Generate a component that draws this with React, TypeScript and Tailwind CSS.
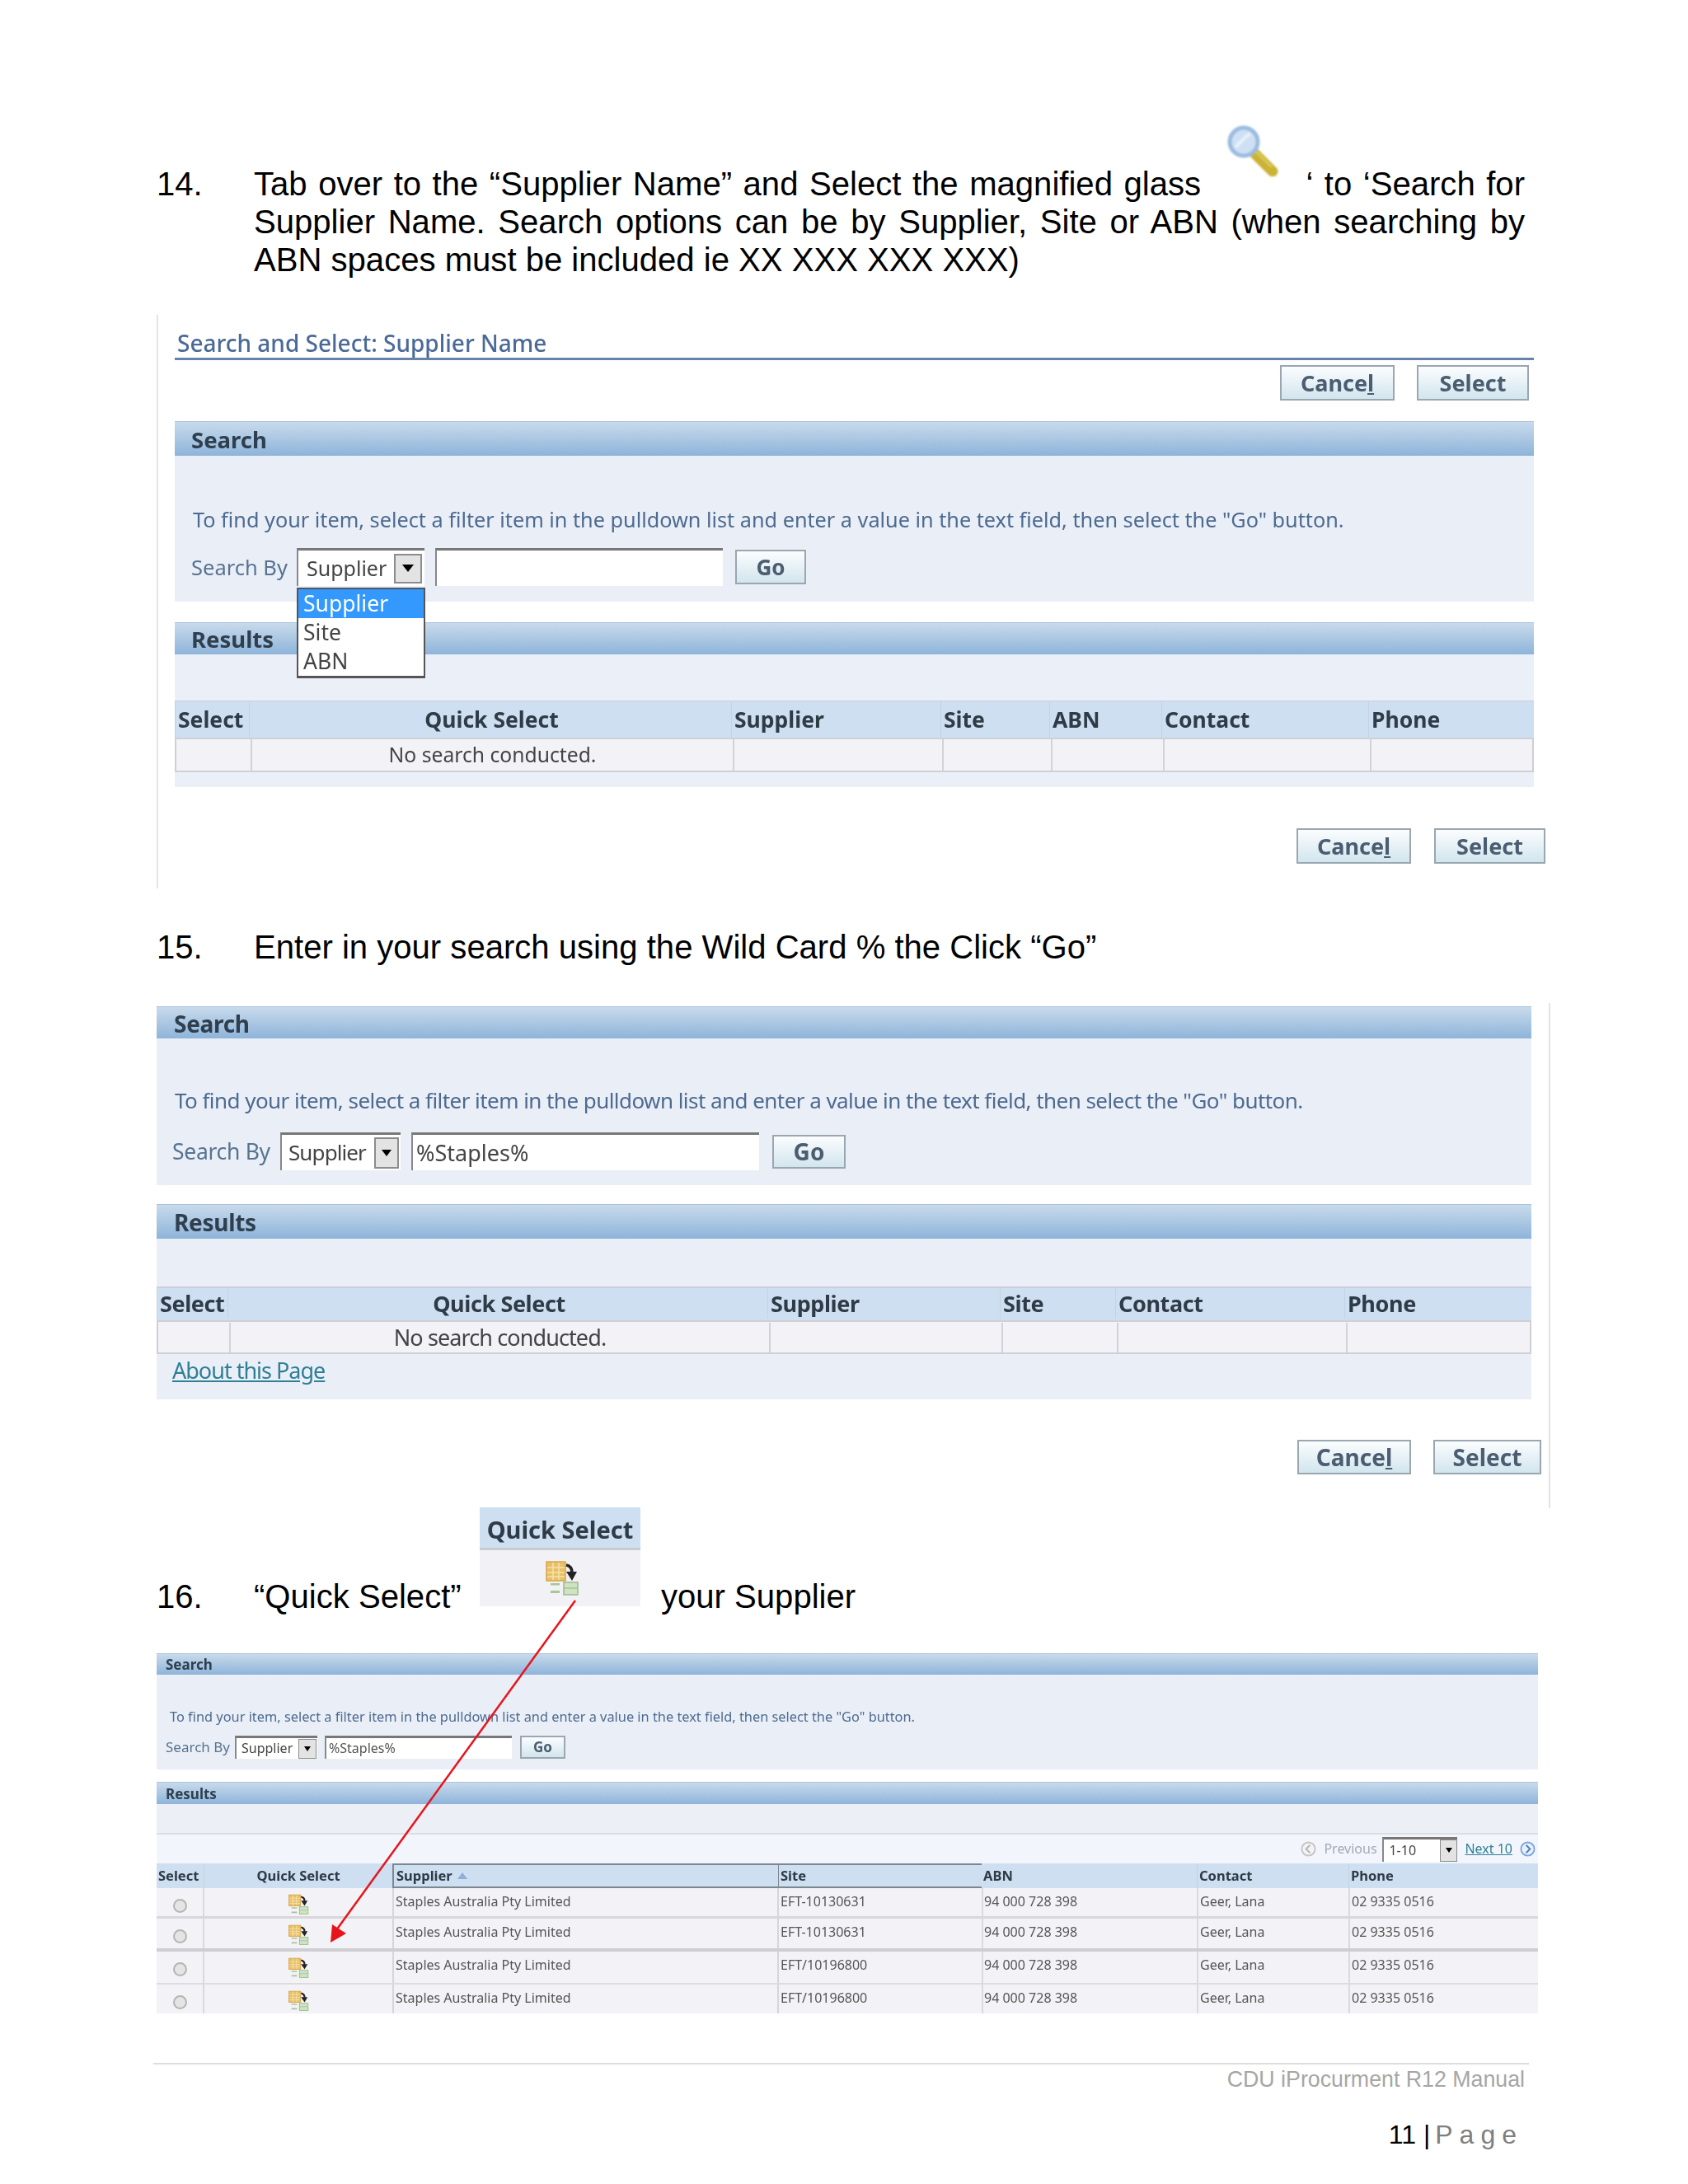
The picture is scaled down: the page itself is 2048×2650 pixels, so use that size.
const TAHOMA = "font-['Noto_Sans','Open_Sans',sans-serif]";

function MagnifierIcon() {
  return (
    <svg viewBox="0 0 62 62" className="absolute left-[-95px] top-[-48px] h-[62px] w-[62px] blur-[1px]">
      <path d="M32 33L55 56" stroke="#c9b234" strokeWidth="13" strokeLinecap="round" />
      <path d="M33 30L54 51" stroke="#dccb5c" strokeWidth="3" />
      <circle cx="20" cy="20" r="17" fill="#cfe0f5" stroke="#9bbbe0" strokeWidth="5" />
      <path d="M10 27C16 20 22 14 28 10" stroke="#e8f1fb" strokeWidth="4" fill="none" />
    </svg>
  );
}

function QuickIcon({ className }: { className: string }) {
  return (
    <svg viewBox="0 0 41 43" preserveAspectRatio="none" className={className}>
      <rect x="1" y="2" width="23" height="23" fill="#e8c068" stroke="#d9a545" strokeWidth="1.5" />
      <path d="M2 9H23M2 15H23M2 20H23M9 3V24M16 3V24" stroke="#f6e2ac" strokeWidth="1.5" />
      <rect x="22" y="27" width="17" height="15" fill="#cfe2c3" stroke="#9dbb8a" strokeWidth="1.5" />
      <path d="M22 34H39" stroke="#a9c596" strokeWidth="1.5" />
      <rect x="6" y="28" width="11" height="2.5" fill="#a8c595" />
      <rect x="6" y="37" width="11" height="3" fill="#a8c595" />
      <path d="M25 6C30 7 32 10 32 15" stroke="#222" strokeWidth="3.5" fill="none" />
      <path d="M25 14H38L32 25Z" fill="#222" />
    </svg>
  );
}

function Button({ label, className }: { label: React.ReactNode; className: string }) {
  return (
    <div
      className={`flex items-center justify-center border-2 border-[#9aa6b0] bg-linear-to-b from-[#fbfdfe] to-[#d2e5ee] font-bold text-[#4b5d70] ${TAHOMA} ${className}`}
    >
      {label}
    </div>
  );
}

const cancelLabel = (
  <span>
    Cance<u>l</u>
  </span>
);

function SelectBox({ value, boxClass, btnClass, triClass }: { value: string; boxClass: string; btnClass: string; triClass: string }) {
  return (
    <div className={`flex items-center justify-between border-t-[3px] border-l-2 border-t-[#777] border-l-[#888] bg-white text-[#444] ${boxClass}`}>
      <span>{value}</span>
      <div className={`flex items-center justify-center border-2 border-[#8c8c8c] bg-[#e3e3e3] ${btnClass}`}>
        <div className={`border-x-transparent border-t-black ${triClass}`} />
      </div>
    </div>
  );
}

function Bar({ label, className }: { label: string; className: string }) {
  return (
    <div className={`flex items-center border-t border-[#a9c3dc] bg-linear-to-b from-[#c8daeb] to-[#8eb4da] pt-[2px] font-bold text-[#2f3f4e] ${className}`}>
      {label}
    </div>
  );
}

function ShotOne() {
  const widths = ["Select", "Quick Select", "Supplier", "Site", "ABN", "Contact", "Phone"];
  return (
    <div className={`mt-[44px] h-[696px] w-[1685px] border-l-2 border-[#e4e4e4] pl-[20px] leading-[1.3] ${TAHOMA} blur-[0.6px]`}>
      <div className="h-[55px] w-[1649px] border-b-[3px] border-[#6883ab] pt-[17px] pl-[3px] text-[28px] leading-[34px] font-medium text-[#4a6a97]">
        Search and Select: Supplier Name
      </div>
      <div className="mt-[6px] flex w-[1643px] justify-end gap-[27px]">
        <Button label={cancelLabel} className="h-[43px] w-[139px] text-[27px]" />
        <Button label="Select" className="h-[43px] w-[136px] text-[27px]" />
      </div>
      <Bar label="Search" className="mt-[25px] h-[42px] w-[1649px] pl-[20px] text-[27.5px]" />
      <div className="h-[177px] w-[1649px] bg-[#eaeff7] pt-[59px]">
        <div className="pl-[22px] text-[25.25px] leading-[36px] text-[#4d6a90]">
          To find your item, select a filter item in the pulldown list and enter a value in the text field, then select the "Go" button.
        </div>
        <div className="mt-[17px] flex items-center pl-[20px] text-[25.5px]">
          <span className="w-[128px] pt-[2px] text-[#587391]">Search By</span>
          <div className="relative">
            <SelectBox
              value="Supplier"
              boxClass="h-[46px] w-[155px] pl-[10px] pr-[3px] text-[25px]"
              btnClass="h-[36px] w-[34px]"
              triClass="border-x-[7px] border-t-[9px]"
            />
            <div className="absolute top-[48px] left-[0px] z-10 w-[156px] border-2 border-b-[3px] border-[#555] bg-white text-[26.5px] leading-[35px] text-[#444]">
              <div className="bg-[#3399ff] pl-[6px] text-white">Supplier</div>
              <div className="pl-[6px]">Site</div>
              <div className="pl-[6px]">ABN</div>
            </div>
          </div>
          <div className="ml-[13px] h-[46px] w-[349px] border-t-[3px] border-l-2 border-t-[#777] border-l-[#888] bg-white" />
          <Button label="Go" className="ml-[15px] h-[42px] w-[86px] pt-[2px] text-[26px]" />
        </div>
      </div>
      <Bar label="Results" className="mt-[25px] h-[39px] w-[1649px] pl-[20px] text-[27.5px]" />
      <div className="h-[161px] w-[1649px] bg-[#ebeff7] pt-[56px]">
        <div className="grid h-[45px] grid-cols-[90px_585px_254px_132px_136px_251px_201px] border-t border-[#ccd] bg-[#cddff0] text-[26.5px] font-bold text-[#2f3b46]">
          {widths.map((h, i) => (
            <div key={h} className={`flex items-center border-l border-[#c4d3e2] pl-[3px] ${i === 1 ? "justify-center" : ""}`}>
              {h}
            </div>
          ))}
        </div>
        <div className="grid h-[42px] grid-cols-[90px_585px_254px_132px_136px_251px_201px] border-2 border-[#cfd0d6] bg-[#f2f2f7] text-[24.7px] text-[#444]">
          {widths.map((h, i) => (
            <div key={h} className={`flex items-center justify-center ${i > 0 ? "border-l-2 border-[#d2d2d8]" : ""}`}>
              {i === 1 ? "No search conducted." : ""}
            </div>
          ))}
        </div>
      </div>
      <div className="mt-[50px] flex w-[1663px] justify-end gap-[28px]">
        <Button label={cancelLabel} className="h-[43px] w-[139px] text-[27px]" />
        <Button label="Select" className="h-[43px] w-[135px] text-[27px]" />
      </div>
    </div>
  );
}

function ShotTwo() {
  const heads = ["Select", "Quick Select", "Supplier", "Site", "Contact", "Phone"];
  return (
    <div className={`mt-[45px] h-[613px] w-[1691px] border-r-2 border-[#e4e4e4] pt-[4px] leading-[1.3] ${TAHOMA} blur-[0.6px]`}>
      <Bar label="Search" className="h-[39px] w-[1668px] pl-[21px] text-[28px] tracking-[-0.3px]" />
      <div className="h-[178px] w-[1668px] bg-[#eaeff7] pt-[57px]">
        <div className="pl-[22px] text-[26px] leading-[36px] tracking-[-0.55px] text-[#4d6a90]">
          To find your item, select a filter item in the pulldown list and enter a value in the text field, then select the "Go" button.
        </div>
        <div className="mt-[21px] flex items-center pl-[19px] text-[27px]">
          <span className="w-[131px] text-[26.5px] tracking-[-0.3px] text-[#587391]">Search By</span>
          <SelectBox
            value="Supplier"
            boxClass="h-[46px] w-[146px] pl-[8px] pr-[2px] text-[26px] tracking-[-0.9px]"
            btnClass="h-[38px] w-[30px]"
            triClass="border-x-[6px] border-t-[8px]"
          />
          <div className="ml-[13px] flex h-[46px] w-[422px] items-center border-t-[3px] border-l-2 border-t-[#777] border-l-[#888] bg-white pl-[4px] text-[#444]">
            %Staples%
          </div>
          <Button label="Go" className="ml-[16px] h-[41px] w-[89px] text-[28px]" />
        </div>
      </div>
      <Bar label="Results" className="mt-[23px] h-[42px] w-[1668px] pl-[21px] text-[28px] tracking-[-0.3px]" />
      <div className="h-[195px] w-[1668px] bg-[#eaeff7] pt-[58px]">
        <div className="grid h-[41px] grid-cols-[86px_655px_282px_140px_278px_227px] border-t-2 border-[#ccd] bg-[#cddff0] pb-[2px] text-[27px] font-bold tracking-[-0.4px] text-[#2f3b46]">
          {heads.map((h, i) => (
            <div key={h} className={`flex items-center border-l border-[#c4d3e2] pl-[3px] ${i === 1 ? "justify-center" : ""}`}>
              {h}
            </div>
          ))}
        </div>
        <div className="grid h-[41px] grid-cols-[86px_655px_282px_140px_278px_227px] border-2 border-[#cfd0d6] bg-[#f2f2f7] pt-[1px] text-[27px] tracking-[-0.9px] text-[#444]">
          {heads.map((h, i) => (
            <div key={h} className={`flex items-center justify-center ${i > 0 ? "border-l-2 border-[#d2d2d8]" : ""}`}>
              {i === 1 ? "No search conducted." : ""}
            </div>
          ))}
        </div>
        <div className="pl-[19px] pt-[2px] text-[27px] leading-[36px] tracking-[-1px] text-[#2f7f95] underline">About this Page</div>
      </div>
      <div className="mt-[49px] flex w-[1680px] justify-end gap-[27px]">
        <Button label={cancelLabel} className="h-[42px] w-[138px] text-[28px]" />
        <Button label="Select" className="h-[42px] w-[131px] text-[28px]" />
      </div>
    </div>
  );
}

const rows = [
  { site: "EFT-10130631", h: "h-[37px]", line: "border-b-[3px] border-[#d8d8dc]" },
  { site: "EFT-10130631", h: "h-[40px]", line: "border-b-4 border-[#cfcfd3]" },
  { site: "EFT/10196800", h: "h-[40px]", line: "border-b-2 border-[#dcdce0]" },
  { site: "EFT/10196800", h: "h-[35px]", line: "" },
];

function ShotThree() {
  return (
    <div className={`mt-[46px] w-[1676px] text-[16px] leading-[1.3] ${TAHOMA} blur-[0.5px]`}>
      <Bar label="Search" className="h-[26px] w-[1676px] pl-[11px] text-[17px]" />
      <div className="h-[115px] bg-[#eaeff7] pt-[40px]">
        <div className="pl-[16px] text-[16.35px] leading-[22px] text-[#4d6a90]">
          To find your item, select a filter item in the pulldown list and enter a value in the text field, then select the "Go" button.
        </div>
        <div className="mt-[12px] flex items-center pl-[11px] text-[17px]">
          <span className="w-[84px] text-[#587391]">Search By</span>
          <SelectBox
            value="Supplier"
            boxClass="h-[28px] w-[100px] pl-[6px] pr-[1px] text-[16px]"
            btnClass="h-[24px] w-[22px] !border"
            triClass="border-x-[4px] border-t-[6px]"
          />
          <div className="ml-[9px] flex h-[28px] w-[227px] items-center border-t-[3px] border-l-2 border-t-[#777] border-l-[#888] bg-white pl-[3px] text-[16px] text-[#555]">
            %Staples%
          </div>
          <Button label="Go" className="ml-[10px] h-[28px] w-[55px] text-[17px]" />
        </div>
      </div>
      <Bar label="Results" className="mt-[15px] h-[27px] w-[1676px] pl-[11px] text-[17px]" />
      <div className="h-[37px] border-b-2 border-[#d9dee6] bg-[#eceff6]" />
      <div className="flex h-[35px] items-center justify-end bg-[#f2f6fc] pr-[3px] text-[16px]">
        <svg viewBox="0 0 20 20" className="h-[19px] w-[19px]">
          <circle cx="10" cy="10" r="8.5" fill="#f3f3f3" stroke="#c4c4c4" strokeWidth="2" />
          <path d="M12 5L7 10L12 15" fill="none" stroke="#b5b5b5" strokeWidth="2" />
        </svg>
        <span className="ml-[9px] w-[71px] text-[#a2a9b2]">Previous</span>
        <SelectBox
          value="1-10"
          boxClass="h-[30px] w-[91px] pl-[6px] text-[#444]"
          btnClass="h-[27px] w-[21px] !border"
          triClass="border-x-[4px] border-t-[6px]"
        />
        <span className="ml-[9px] text-[#2f7f95] underline">Next 10</span>
        <svg viewBox="0 0 20 20" className="ml-[9px] h-[19px] w-[19px]">
          <circle cx="10" cy="10" r="8.5" fill="#e8f1fb" stroke="#7ea6dc" strokeWidth="2" />
          <path d="M8 5L13 10L8 15" fill="none" stroke="#4b7fc8" strokeWidth="2" />
        </svg>
      </div>
      <div className="grid h-[30px] grid-cols-[58px_228px_469px_507px_184px_230px] bg-[#cddff0] text-[16.5px] font-bold text-[#2f3b46]">
        <div className="flex items-center border-r border-[#c4d3e2] pl-[2px]">Select</div>
        <div className="flex items-center justify-center">Quick Select</div>
        <div className="flex items-center gap-[6px] border-2 border-r border-[#7d8790] pl-[3px]">
          Supplier
          <div className="border-x-[6px] border-b-[8px] border-x-transparent border-b-[#8db0d8]" />
        </div>
        <div className="grid grid-cols-[246px_261px]">
          <div className="flex items-center border-y-2 border-[#7d8790] pl-[2px]">Site</div>
          <div className="flex items-center pl-[2px]">ABN</div>
        </div>
        <div className="flex items-center border-l border-[#c4d3e2] pl-[2px]">Contact</div>
        <div className="flex items-center border-l border-[#c4d3e2] pl-[2px]">Phone</div>
      </div>
      {rows.map((r, i) => (
        <div key={i} className={`grid grid-cols-[58px_228px_469px_246px_261px_184px_230px] bg-[#f3f2f6] text-[16px] text-[#555] ${r.h} ${r.line}`}>
          <div className="flex justify-center border-r-2 border-[#dadade] pt-[13px]">
            <div className="h-[17px] w-[17px] rounded-full border-2 border-[#b5b5b5] bg-[#e4e4e4]" />
          </div>
          <div className="flex justify-center">
            <QuickIcon className="mt-[7px] h-[25px] w-[25px]" />
          </div>
          <div className="border-x-2 border-[#d5d5da] pl-[2px] pt-[6px]">Staples Australia Pty Limited</div>
          <div className="pl-[2px] pt-[6px]">{r.site}</div>
          <div className="border-l-2 border-[#dadade] pl-[1px] pt-[6px]">94 000 728 398</div>
          <div className="border-l-2 border-[#dadade] pl-[2px] pt-[6px]">Geer, Lana</div>
          <div className="border-l-2 border-[#dadade] pl-[2px] pt-[6px]">02 9335 0516</div>
        </div>
      ))}
    </div>
  );
}

export default function App() {
  return (
    <div className="relative h-[2650px] w-[2048px] overflow-hidden bg-white pl-[190px] pt-[200px] font-['Liberation_Sans',Arial,sans-serif] text-[40.1px] leading-[46px] text-black">
      <div className="flex">
        <div className="w-[118px]">14.</div>
        <div className="w-[1542px]">
          <div className="flex justify-between">
            <span className="[word-spacing:2.4px]">Tab over to the “Supplier Name” and Select the magnified glass</span>
            <span className="relative [word-spacing:2.4px]">
              <MagnifierIcon />‘ to ‘Search for
            </span>
          </div>
          <div className="[text-align-last:justify]">Supplier Name. Search options can be by Supplier, Site or ABN (when searching by</div>
          <div>ABN spaces must be included ie XX XXX XXX XXX)</div>
        </div>
      </div>

      <ShotOne />

      <div className="mt-[48px] flex">
        <div className="w-[118px]">15.</div>
        <div>Enter in your search using the Wild Card % the Click “Go”</div>
      </div>

      <ShotTwo />

      <div className="-mt-[1px] flex h-[131px]">
        <div className="mt-[85px] w-[118px]">16.</div>
        <div className="mt-[85px] w-[274px]">“Quick Select”</div>
        <div className="h-[120px] w-[195px] bg-[#f2f2f6]">
          <div className={`flex h-[52px] items-center justify-center border-b-[3px] border-[#c9cbd2] bg-[#cddff0] pt-[4px] text-[29px] font-bold text-[#2f3b46] ${TAHOMA} blur-[0.5px]`}>
            Quick Select
          </div>
          <div className="flex justify-center pt-[12px] pl-[6px]">
            <QuickIcon className="h-[43px] w-[41px] blur-[0.5px]" />
          </div>
        </div>
        <div className="mt-[85px] ml-[25px]">your Supplier</div>
      </div>

      <ShotThree />

      <div className="mt-[60px] -ml-[4px] w-[1669px] border-t-2 border-[#dddddd] pr-[5px] pt-[1px] text-right text-[26.75px] leading-[34px] text-[#a6a6a6]">
        CDU iProcurment R12 Manual
      </div>
      <div className="mt-[31px] flex w-[1658px] justify-end text-[32px] leading-[38px] text-black">
        <span>11 | </span>
        <span className="ml-[6px] tracking-[8px] text-[#7f7f7f]">Page</span>
      </div>

      <svg className="pointer-events-none absolute inset-0 h-[2650px] w-[2048px]" viewBox="0 0 2048 2650">
        <line x1="698" y1="1942" x2="408" y2="2342" stroke="#e8141c" strokeWidth="2.5" />
        <polygon points="401,2357 403,2335 420,2346" fill="#e8141c" />
      </svg>
    </div>
  );
}
